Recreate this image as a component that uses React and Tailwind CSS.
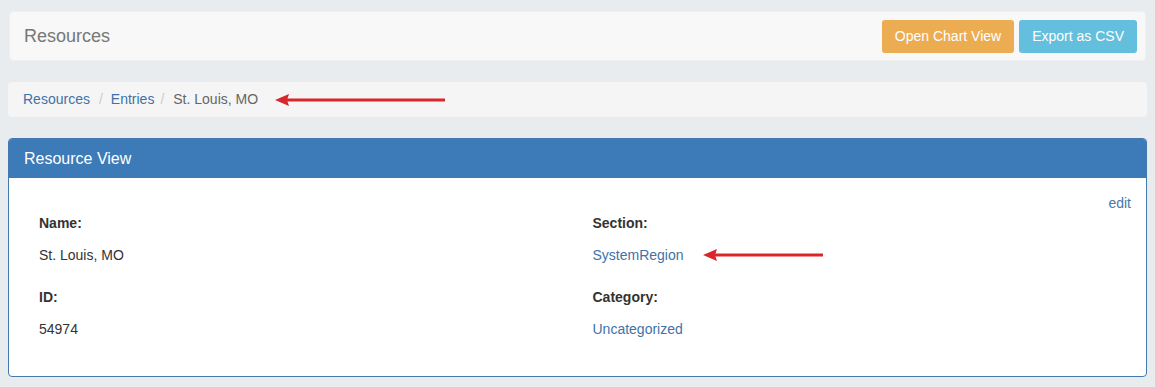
import React from "react";

const FONT = { fontFamily: '"Liberation Sans", Arial, sans-serif' };

// Red annotation arrow pointing left
function Arrow({ width }) {
  return (
    <svg width={width} height="14" viewBox={`0 0 ${width} 14`} className="block">
      <polygon points="0,7 14,1 12,7 14,13" fill="#d8262d" />
      <rect x="10" y="5.5" width={width - 10} height="3" fill="#d8262d" />
    </svg>
  );
}

function Field({ label, children, className = "" }) {
  return (
    <div className={className}>
      <div className="text-[14px] leading-5 font-bold text-[#333]">{label}</div>
      <div className="mt-3 text-[14px] leading-5">{children}</div>
    </div>
  );
}

export default function App() {
  return (
    <div
      style={FONT}
      className="min-h-[387px] w-[1155px] bg-[#e9ecef] pt-[11px] pb-[10px] text-[#333]"
    >
      {/* Page header */}
      <div className="mx-[9px] flex h-[50px] items-center justify-between rounded-[4px] border border-[#eef0f2] bg-[#f8f8f8] pl-[14px] pr-[8px]">
        <h1 className="text-[18px] font-normal text-[#777]">Resources</h1>
        <div className="flex gap-[5px]">
          <button className="h-[33px] rounded-[3px] bg-[#ecac52] px-[13px] text-[14px] text-white">
            Open Chart View
          </button>
          <button className="h-[33px] rounded-[3px] bg-[#63bfdd] px-[13px] text-[14px] text-white">
            Export as CSV
          </button>
        </div>
      </div>

      {/* Breadcrumb */}
      <div className="mx-2 mt-[21px] flex h-[35px] items-center rounded-[4px] bg-[#f5f5f5] pl-[15px] text-[14px]">
        <a className="text-[#3f72a8]">Resources</a>
        <span className="pl-[9px] pr-[8px] text-[#ccc]">/</span>
        <a className="text-[#3f72a8]">Entries</a>
        <span className="pl-[6px] pr-[9px] text-[#ccc]">/</span>
        <span className="text-[#666]">St. Louis, MO</span>
        <div className="ml-[17px]">
          <Arrow width={170} />
        </div>
      </div>

      {/* Panel */}
      <div className="mx-2 mt-[21px] overflow-hidden rounded-[4px] border border-[#4379ae] bg-white">
        <div className="flex h-[39px] items-center bg-[#3d7ab8] px-[15px] text-[16px] text-white">
          Resource View
        </div>
        <div className="px-[15px] pt-[15px] pb-[37px]">
          <div className="h-5 text-right text-[14px] leading-5">
            <a className="text-[#4a77a8]">edit</a>
          </div>
          <div className="grid grid-cols-2">
            <div className="px-[15px]">
              <Field label="Name:">St. Louis, MO</Field>
              <Field label="ID:" className="mt-[22px]">54974</Field>
            </div>
            <div className="px-[15px]">
              <Field label="Section:">
                <div className="flex items-center">
                  <a className="text-[#3f72a8]">SystemRegion</a>
                  <div className="ml-[19px]">
                    <Arrow width={120} />
                  </div>
                </div>
              </Field>
              <Field label="Category:" className="mt-[22px]">
                <a className="text-[#3f72a8]">Uncategorized</a>
              </Field>
            </div>
          </div>
        </div>
      </div>
    </div>
  );
}
